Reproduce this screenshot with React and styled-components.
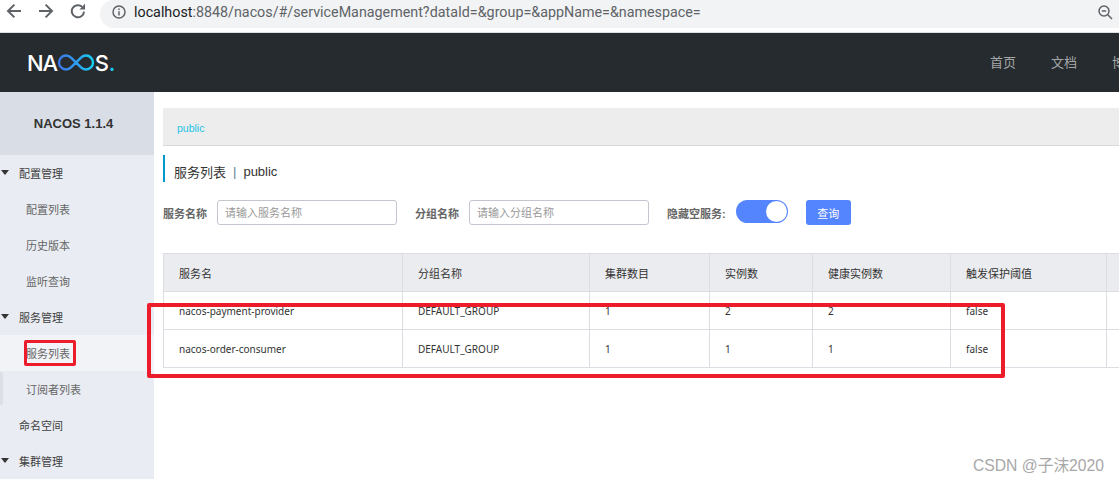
import styled, { createGlobalStyle } from "styled-components";

const GlobalStyle = createGlobalStyle`
  html, body {
    margin: 0;
    padding: 0;
    height: 479px;
    overflow: hidden;
    background: #fff;
    font-family: "Liberation Sans", "Noto Sans CJK SC", sans-serif;
  }
`;

const menu = [
  { label: "配置管理", group: true },
  { label: "配置列表" },
  { label: "历史版本" },
  { label: "监听查询" },
  { label: "服务管理", group: true },
  { label: "服务列表", active: true },
  { label: "订阅者列表" },
  { label: "命名空间", plain: true },
  { label: "集群管理", group: true },
];

const columns = [
  { title: "服务名", width: 239 },
  { title: "分组名称", width: 187 },
  { title: "集群数目", width: 120 },
  { title: "实例数", width: 103 },
  { title: "健康实例数", width: 138 },
  { title: "触发保护阈值", width: 156 },
  { title: "", width: 13 },
];

const rows = [
  ["nacos-payment-provider", "DEFAULT_GROUP", "1", "2", "2", "false", ""],
  ["nacos-order-consumer", "DEFAULT_GROUP", "1", "1", "1", "false", ""],
];

const App = () => {
  return (
    <Page>
      <GlobalStyle />
      <BrowserBar>
        <NavIcon viewBox="0 0 16 16">
          <path d="M15 8H2M8.4 1.6L2 8L8.4 14.4" />
        </NavIcon>
        <NavIcon viewBox="0 0 16 16">
          <path d="M1 8H14M7.6 1.6L14 8L7.6 14.4" />
        </NavIcon>
        <NavIcon viewBox="0 0 16 16">
          <path d="M14 8.6A6.1 6.1 0 1 1 12.2 3.9" />
          <path d="M15 0.8V6.4H9.4" fill="#5f6368" stroke="none" />
        </NavIcon>
        <AddressPill>
          <InfoIcon viewBox="0 0 16 16">
            <circle cx="8" cy="8" r="6" />
            <path d="M8 7.2V11.4M8 4.6V6" />
          </InfoIcon>
          <Url>
            localhost<UrlRest>:8848/nacos/#/serviceManagement?dataId=&amp;group=&amp;appName=&amp;namespace=</UrlRest>
          </Url>
          <ZoomIcon viewBox="0 0 16 16">
            <circle cx="7" cy="7" r="5" />
            <path d="M4.8 7H9.2M10.8 10.8L15 15" />
          </ZoomIcon>
        </AddressPill>
      </BrowserBar>

      <Header>
        <Logo>
          <span>NA</span>
          <LogoLoop viewBox="0 0 42 17">
            <defs>
              <linearGradient id="loop" x1="0" x2="1" y1="0" y2="0">
                <stop offset="0" stopColor="#3b78e7" />
                <stop offset="0.5" stopColor="#2f9cf0" />
                <stop offset="1" stopColor="#16d2f2" />
              </linearGradient>
            </defs>
            <path
              d="M16 3.6A7 7 0 1 0 16 13.4L26 3.6A7 7 0 1 1 26 13.4L16 3.6"
              fill="none"
              stroke="url(#loop)"
              strokeWidth="2.4"
            />
          </LogoLoop>
          <span>S</span>
          <LogoDot>.</LogoDot>
        </Logo>
        <HeaderNav>
          <HeaderLink>首页</HeaderLink>
          <HeaderLink>文档</HeaderLink>
          <HeaderLink>博客</HeaderLink>
        </HeaderNav>
      </Header>

      <Body>
        <Sidebar>
          <SideTitle>NACOS 1.1.4</SideTitle>
          {menu.map((item) => (
            <MenuItem key={item.label} $active={item.active} $top={item.group || item.plain}>
              {item.group && <Caret />}
              {item.label}
            </MenuItem>
          ))}
          <SideHandle />
        </Sidebar>

        <Main>
          <Breadcrumb>public</Breadcrumb>
          <PageTitle>
            服务列表<TitleSep>|</TitleSep>public
          </PageTitle>
          <SearchForm>
            <FieldLabel>服务名称</FieldLabel>
            <SearchInput placeholder="请输入服务名称" />
            <FieldLabel>分组名称</FieldLabel>
            <SearchInput placeholder="请输入分组名称" />
            <FieldLabel>隐藏空服务:</FieldLabel>
            <Switch>
              <SwitchKnob />
            </Switch>
            <QueryButton>查询</QueryButton>
          </SearchForm>
          <Table>
            <colgroup>
              {columns.map((col, i) => (
                <col key={i} style={{ width: col.width }} />
              ))}
            </colgroup>
            <thead>
              <tr>
                {columns.map((col, i) => (
                  <HeadCell key={i}>{col.title}</HeadCell>
                ))}
              </tr>
            </thead>
            <tbody>
              {rows.map((row) => (
                <tr key={row[0]}>
                  {row.map((cell, i) => (
                    <Cell key={i}>{cell}</Cell>
                  ))}
                </tr>
              ))}
            </tbody>
          </Table>
        </Main>
      </Body>

      <TableMark />
      <MenuMark />
      <Watermark>CSDN @子沫2020</Watermark>
    </Page>
  );
};

export default App;

// styled Components
const Page = styled.div`
  position: relative;
  width: 1119px;
  height: 479px;
  overflow: hidden;
  display: flex;
  flex-direction: column;
`;

const BrowserBar = styled.div`
  height: 33px;
  flex: none;
  display: flex;
  align-items: flex-start;
  box-sizing: border-box;
  padding: 3px 0 0 6px;
  gap: 16px;
  background: #fff;
  border-bottom: 1px solid #dedfe1;
`;

const NavIcon = styled.svg`
  width: 16px;
  height: 16px;
  flex: none;
  fill: none;
  stroke: #5f6368;
  stroke-width: 2;
`;

const AddressPill = styled.div`
  flex: 1;
  height: 28px;
  box-sizing: border-box;
  margin: -3px 0 0 -2px;
  display: flex;
  align-items: center;
  padding: 0 6px 5px 11px;
  background: #f1f3f4;
  border-radius: 14px 0 0 14px;
`;

const InfoIcon = styled.svg`
  width: 16px;
  height: 16px;
  flex: none;
  fill: none;
  stroke: #5f6368;
  stroke-width: 1.5;
`;

const ZoomIcon = styled(InfoIcon)`
  margin-left: auto;
`;

const Url = styled.span`
  margin-left: 7px;
  font-family: "Roboto", "Liberation Sans", sans-serif;
  font-size: 14.3px;
  color: #202124;
  white-space: nowrap;
`;

const UrlRest = styled.span`
  color: #5f6368;
`;

const Header = styled.header`
  height: 59px;
  flex: none;
  display: flex;
  align-items: center;
  justify-content: space-between;
  background: #262b2f;
`;

const Logo = styled.div`
  display: flex;
  align-items: center;
  margin-left: 27px;
  font-family: "Inter", "Liberation Sans", sans-serif;
  font-size: 22px;
  font-weight: 500;
  letter-spacing: -1.2px;
  color: #fff;
`;

const LogoLoop = styled.svg`
  width: 42px;
  height: 17px;
  margin: 0 -2px 0 -2px;
`;

const LogoDot = styled.span`
  margin-left: 1px;
  color: #18c9ee;
`;

const HeaderNav = styled.nav`
  display: flex;
  gap: 35px;
  margin: -2px -16px 0 0;
  width: 145px;
  overflow: hidden;
  flex: none;
`;

const HeaderLink = styled.a`
  flex: none;
  font-size: 13px;
  color: #a5a7a9;
`;

const Body = styled.div`
  flex: 1;
  display: flex;
  min-height: 0;
`;

const Sidebar = styled.aside`
  position: relative;
  width: 154px;
  flex: none;
  background: #e9ecf2;
  overflow: hidden;
`;

const SideTitle = styled.div`
  height: 63px;
  box-sizing: border-box;
  padding-right: 7px;
  display: flex;
  align-items: center;
  justify-content: center;
  background: #d8dde6;
  font-size: 13px;
  font-weight: 700;
  color: #333;
`;

const MenuItem = styled.div`
  position: relative;
  height: 36px;
  display: flex;
  align-items: center;
  padding-left: ${(p) => (p.$top ? "19px" : "26px")};
  font-size: 11px;
  color: ${(p) => (p.$top ? "#404040" : "#666")};
  background: ${(p) => (p.$active ? "#f2f3f7" : "transparent")};
`;

const Caret = styled.i`
  position: absolute;
  left: 1px;
  top: 15px;
  border-style: solid;
  border-width: 5px 4px 0;
  border-color: #333 transparent transparent;
`;

const SideHandle = styled.div`
  position: absolute;
  left: 0;
  top: 280px;
  width: 3px;
  height: 33px;
  background: #dcdfe6;
  border-radius: 0 3px 3px 0;
`;

const Main = styled.main`
  flex: 1;
  min-width: 0;
  padding: 16px 0 0 9px;
`;

const Breadcrumb = styled.div`
  height: 38px;
  box-sizing: border-box;
  display: flex;
  align-items: center;
  padding: 3px 0 0 14px;
  background: #ededed;
  border-bottom: 1px solid #d9d9d9;
  font-size: 10.5px;
  color: #1ec3e6;
`;

const PageTitle = styled.h1`
  height: 27px;
  margin: 9px 0 0;
  box-sizing: border-box;
  display: flex;
  align-items: center;
  padding: 5px 0 0 9px;
  border-left: 2px solid #09c;
  font-size: 13px;
  font-weight: 400;
  color: #333;
`;

const TitleSep = styled.span`
  margin: 0 7px;
  color: #5a7f9a;
`;

const SearchForm = styled.form`
  height: 25px;
  margin-top: 18px;
  display: flex;
  align-items: center;
`;

const FieldLabel = styled.label`
  flex: none;
  margin: 0 10px 0 18px;
  font-size: 11px;
  font-weight: 700;
  color: #666;

  &:first-child {
    margin-left: 0;
  }
`;

const SearchInput = styled.input`
  width: 180px;
  height: 25px;
  box-sizing: border-box;
  padding: 0 7px;
  border: 1px solid #c4c6cf;
  border-radius: 3px;
  background: #fff;
  font-family: inherit;
  font-size: 11px;
  outline: none;

  &::placeholder {
    color: #999;
  }
`;

const Switch = styled.div`
  position: relative;
  width: 52px;
  height: 23px;
  flex: none;
  margin: -2px 0 0 0;
  border-radius: 12px;
  background: #5584ff;
`;

const SwitchKnob = styled.span`
  position: absolute;
  right: 1px;
  top: 1px;
  width: 21px;
  height: 21px;
  border-radius: 50%;
  background: #fff;
`;

const QueryButton = styled.button`
  width: 45px;
  height: 25px;
  flex: none;
  margin-left: 18px;
  padding: 0;
  border: 0;
  border-radius: 3px;
  background: #5584ff;
  font-family: inherit;
  font-size: 11px;
  color: #fff;
`;

const Table = styled.table`
  width: 956px;
  margin-top: 28px;
  table-layout: fixed;
  border-collapse: collapse;
`;

const HeadCell = styled.th`
  height: 38px;
  box-sizing: border-box;
  padding: 0 0 0 15px;
  border: 1px solid #dcdee3;
  background: #ebecf0;
  font-size: 11px;
  font-weight: 400;
  text-align: left;
  color: #333;
`;

const Cell = styled.td`
  height: 38px;
  box-sizing: border-box;
  padding: 0 0 0 15px;
  border: 1px solid #dcdee3;
  font-family: "Noto Sans", "Liberation Sans", sans-serif;
  font-size: 10px;
  color: #333;
`;

const TableMark = styled.div`
  position: absolute;
  left: 147px;
  top: 303px;
  width: 858px;
  height: 75px;
  box-sizing: border-box;
  border: 4px solid #ed1c2a;
  border-radius: 2px;
`;

const MenuMark = styled.div`
  position: absolute;
  left: 24px;
  top: 340px;
  width: 52px;
  height: 26px;
  box-sizing: border-box;
  border: 3px solid #ed1c2a;
  border-radius: 2px;
`;

const Watermark = styled.div`
  position: absolute;
  left: 973px;
  top: 453px;
  font-size: 15.7px;
  white-space: nowrap;
  color: #a8a8a8;
`;
